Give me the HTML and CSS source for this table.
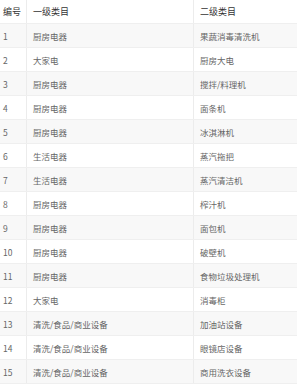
FILE: index.html
```html
<!DOCTYPE html>
<html lang="zh">
<head>
<meta charset="utf-8">
<link rel="stylesheet" href="styles.css">
</head>
<body>
<div class="table">
  <div class="row head"><div class="c c1">编号</div><div class="c c2">一级类目</div><div class="c c3">二级类目</div></div>
  <div class="row"><div class="c c1">1</div><div class="c c2">厨房电器</div><div class="c c3">果蔬消毒清洗机</div></div>
  <div class="row"><div class="c c1">2</div><div class="c c2">大家电</div><div class="c c3">厨房大电</div></div>
  <div class="row"><div class="c c1">3</div><div class="c c2">厨房电器</div><div class="c c3">搅拌/料理机</div></div>
  <div class="row"><div class="c c1">4</div><div class="c c2">厨房电器</div><div class="c c3">面条机</div></div>
  <div class="row"><div class="c c1">5</div><div class="c c2">厨房电器</div><div class="c c3">冰淇淋机</div></div>
  <div class="row"><div class="c c1">6</div><div class="c c2">生活电器</div><div class="c c3">蒸汽拖把</div></div>
  <div class="row"><div class="c c1">7</div><div class="c c2">生活电器</div><div class="c c3">蒸汽清洁机</div></div>
  <div class="row"><div class="c c1">8</div><div class="c c2">厨房电器</div><div class="c c3">榨汁机</div></div>
  <div class="row"><div class="c c1">9</div><div class="c c2">厨房电器</div><div class="c c3">面包机</div></div>
  <div class="row"><div class="c c1">10</div><div class="c c2">厨房电器</div><div class="c c3">破壁机</div></div>
  <div class="row"><div class="c c1">11</div><div class="c c2">厨房电器</div><div class="c c3">食物垃圾处理机</div></div>
  <div class="row"><div class="c c1">12</div><div class="c c2">大家电</div><div class="c c3">消毒柜</div></div>
  <div class="row"><div class="c c1">13</div><div class="c c2">清洗/食品/商业设备</div><div class="c c3">加油站设备</div></div>
  <div class="row"><div class="c c1">14</div><div class="c c2">清洗/食品/商业设备</div><div class="c c3">眼镜店设备</div></div>
  <div class="row"><div class="c c1">15</div><div class="c c2">清洗/食品/商业设备</div><div class="c c3">商用洗衣设备</div></div>
</div>
</body>
</html>
```
FILE: styles.css
```css
html, body {
  margin: 0;
  padding: 0;
  background: #ffffff;
}
body {
  font-family: "Noto Sans CJK SC", "Noto Sans", sans-serif;
  font-size: 8.5px;
  color: #666666;
}
.table {
  display: flex;
  flex-direction: column;
  width: 297px;
}
.row {
  display: grid;
  grid-template-columns: 26px 167px 1fr;
  height: 24px;
  border-bottom: 1px solid #efefef;
  box-sizing: border-box;
  background: #ffffff;
}
.row:nth-child(even) {
  background: #f8f8f8;
}
.c {
  display: flex;
  align-items: center;
  padding-left: 3px;
  white-space: nowrap;
}
.c2, .c3 {
  border-left: 1px solid #ececec;
  padding-left: 6px;
}
.head {
  color: #333333;
  font-size: 9px;
}
```
